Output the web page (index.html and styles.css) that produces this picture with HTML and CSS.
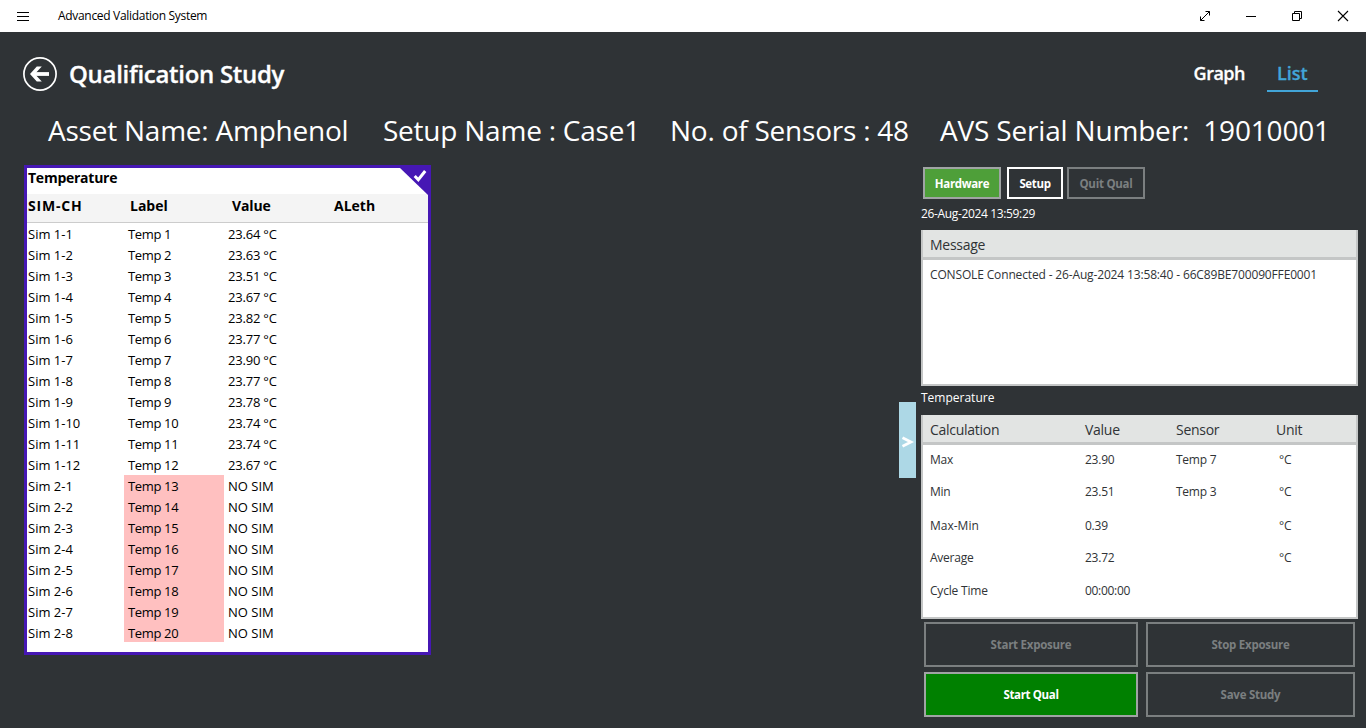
FILE: index.html
```html
<!DOCTYPE html>
<html lang="en">
<head>
<meta charset="utf-8">
<title>Advanced Validation System</title>
<link rel="stylesheet" href="styles.css">
</head>
<body>
<header class="titlebar">
  <svg class="menu" width="12" height="9" viewBox="0 0 12 9" shape-rendering="crispEdges"><path d="M0 .5h12M0 4.5h12M0 8.5h12" stroke="#000"/></svg>
  <span class="app-name">Advanced Validation System</span>
  <div class="window-controls">
    <svg width="12" height="12" viewBox="0 0 12 12" fill="none" stroke="#000"><path d="M1.5 10.5l9-9M6.5 1.5h4v4M1.5 6.5v4h4"/></svg>
    <svg width="12" height="12" viewBox="0 0 12 12" fill="none" stroke="#000"><path d="M1 6.5h10"/></svg>
    <svg width="12" height="12" viewBox="0 0 12 12" fill="none" stroke="#000"><path d="M1.5 3.5h7v7h-7zM3.5 3.5v-2h7v7h-2"/></svg>
    <svg width="12" height="12" viewBox="0 0 12 12" fill="none" stroke="#000" stroke-width="1.1"><path d="M1 1l10 10M11 1L1 11"/></svg>
  </div>
</header>
<div class="page-head">
  <svg class="back" width="34" height="34" viewBox="0 0 34 34" fill="none" stroke="#fff"><circle cx="17" cy="17" r="16.1" stroke-width="1.7"/><path d="M10 17h16" stroke-width="3.8"/><path d="M13.8 9.5h5L11.8 17l7 7.5h-5L7 17z" fill="#fff" stroke="none"/></svg>
  <h1 class="title">Qualification Study</h1>
  <nav class="tabs"><a class="tab"><span>Graph</span></a><a class="tab active"><span>List</span></a></nav>
</div>
<div class="info">
  <span class="i1">Asset Name: Amphenol</span><span class="i2">Setup Name : Case1</span><span class="i3">No. of Sensors : 48</span><span class="i4">AVS Serial Number:&nbsp; 19010001</span>
</div>
<main class="content">
  <section class="card">
    <div class="card-title"><span>Temperature</span></div>
    <svg class="corner" width="28" height="27" viewBox="0 0 28 27"><path d="M0 0h28v27z" fill="#4617b4"/><path d="M14.7 8l3.6 3.7L25.2 3" fill="none" stroke="#fff" stroke-width="3"/></svg>
    <div class="card-head"><span class="sim">SIM-CH</span><span>Label</span><span class="val">Value</span><span>ALeth</span></div>
    <div class="rows">
      <div class="row"><span>Sim 1-1</span><span>Temp 1</span><span>23.64 °C</span></div>
      <div class="row"><span>Sim 1-2</span><span>Temp 2</span><span>23.63 °C</span></div>
      <div class="row"><span>Sim 1-3</span><span>Temp 3</span><span>23.51 °C</span></div>
      <div class="row"><span>Sim 1-4</span><span>Temp 4</span><span>23.67 °C</span></div>
      <div class="row"><span>Sim 1-5</span><span>Temp 5</span><span>23.82 °C</span></div>
      <div class="row"><span>Sim 1-6</span><span>Temp 6</span><span>23.77 °C</span></div>
      <div class="row"><span>Sim 1-7</span><span>Temp 7</span><span>23.90 °C</span></div>
      <div class="row"><span>Sim 1-8</span><span>Temp 8</span><span>23.77 °C</span></div>
      <div class="row"><span>Sim 1-9</span><span>Temp 9</span><span>23.78 °C</span></div>
      <div class="row"><span>Sim 1-10</span><span>Temp 10</span><span>23.74 °C</span></div>
      <div class="row"><span>Sim 1-11</span><span>Temp 11</span><span>23.74 °C</span></div>
      <div class="row"><span>Sim 1-12</span><span>Temp 12</span><span>23.67 °C</span></div>
      <div class="row none"><span>Sim 2-1</span><span>Temp 13</span><span>NO SIM</span></div>
      <div class="row none"><span>Sim 2-2</span><span>Temp 14</span><span>NO SIM</span></div>
      <div class="row none"><span>Sim 2-3</span><span>Temp 15</span><span>NO SIM</span></div>
      <div class="row none"><span>Sim 2-4</span><span>Temp 16</span><span>NO SIM</span></div>
      <div class="row none"><span>Sim 2-5</span><span>Temp 17</span><span>NO SIM</span></div>
      <div class="row none"><span>Sim 2-6</span><span>Temp 18</span><span>NO SIM</span></div>
      <div class="row none"><span>Sim 2-7</span><span>Temp 19</span><span>NO SIM</span></div>
      <div class="row none last"><span>Sim 2-8</span><span>Temp 20</span><span>NO SIM</span></div>
    </div>
  </section>
  <button class="drawer"><svg width="12" height="12" viewBox="0 0 12 12" fill="none" stroke="#fff" stroke-width="2.7"><path d="M.5 1.8L9 6 .5 10.2"/></svg></button>
  <aside class="side">
    <div class="toolbar"><button class="btn hardware"><span>Hardware</span></button><button class="btn setup"><span>Setup</span></button><button class="btn quit off"><span>Quit Qual</span></button></div>
    <div class="stamp"><span>26-Aug-2024 13:59:29</span></div>
    <div class="panel messages">
      <div class="panel-head"><span>Message</span></div>
      <div class="message"><span>CONSOLE Connected - 26-Aug-2024 13:58:40 - 66C89BE700090FFE0001</span></div>
    </div>
    <div class="caption"><span>Temperature</span></div>
    <div class="panel stats">
      <div class="panel-head cols"><span>Calculation</span><span>Value</span><span>Sensor</span><span>Unit</span></div>
      <div class="cols stat"><span>Max</span><span>23.90</span><span>Temp 7</span><span class="unit">°C</span></div>
      <div class="cols stat tall"><span>Min</span><span>23.51</span><span>Temp 3</span><span class="unit">°C</span></div>
      <div class="cols stat"><span class="wide">Max-Min</span><span>0.39</span><span></span><span class="unit">°C</span></div>
      <div class="cols stat"><span>Average</span><span>23.72</span><span></span><span class="unit">°C</span></div>
      <div class="cols stat"><span class="cycle">Cycle Time</span><span class="cycle time">00:00:00</span></div>
    </div>
    <div class="actions"><button class="btn off"><span>Start Exposure</span></button><button class="btn off"><span>Stop Exposure</span></button><button class="btn start"><span>Start Qual</span></button><button class="btn off"><span>Save Study</span></button></div>
  </aside>
</main>
</body>
</html>
```
FILE: styles.css
```css
* { box-sizing: border-box; }
html, body { margin: 0; height: 728px; overflow: hidden; }
body { background: #2f3336; color: #fff; font-family: "Open Sans", "Noto Sans", sans-serif; font-size: 12px; }
svg { display: block; }
button { font: inherit; color: inherit; margin: 0; padding: 0; }

.titlebar { display: flex; align-items: center; height: 32px; padding: 0 17px; background: #fff; color: #000; }
.app-name { margin-left: 29px; line-height: 32px; letter-spacing: -0.31px; }
.window-controls { display: flex; gap: 34px; margin-left: auto; }

.page-head { display: flex; align-items: center; height: 83px; padding: 1px 48px 0 23px; }
.title { margin: 0 0 0 12px; font-size: 24px; font-weight: 600; line-height: 34px; letter-spacing: -0.29px; -webkit-text-stroke: 0.3px #fff; }
.tabs { display: flex; gap: 12px; margin-left: auto; font-size: 18px; font-weight: 600; letter-spacing: -0.5px; -webkit-text-stroke: 0.3px currentColor; }
.tab { padding: 0 10px; height: 36px; line-height: 34px; border-bottom: 2px solid transparent; }
.tab.active { width: 51px; color: #42a5d8; border-color: #42a5d8; letter-spacing: 0; }

.info { display: flex; height: 50px; padding-left: 48px; font-size: 28px; line-height: 30px; letter-spacing: -0.23px; white-space: nowrap; }
.i1 { width: 335px; }
.i2 { width: 287px; }
.i3 { width: 270px; }
.i4 { letter-spacing: -0.18px; }

.content { display: flex; align-items: flex-start; padding-left: 24px; }
.card { position: relative; width: 407px; height: 490px; border: 3px solid #4617b4; background: #fff; color: #000; }
.card-title { height: 26px; padding-left: 1px; font-size: 14px; font-weight: 700; line-height: 20px; letter-spacing: -0.25px; }
.corner { position: absolute; top: 0; right: 0; }
.card-head { display: grid; grid-template-columns: 102px 102px 102px 1fr; height: 29px; padding-left: 1px; background: #f4f4f4; border-bottom: 1px solid #ccc; font-size: 14px; font-weight: 700; line-height: 24px; }
.sim { letter-spacing: 0.8px; }
.val { letter-spacing: -0.15px; }
.row { display: grid; grid-template-columns: 97px 100px 1fr; height: 21px; font-size: 13px; line-height: 23px; }
.row > span:first-child { padding-left: 1px; }
.row > span + span { padding-left: 4px; letter-spacing: -0.35px; }
.row > span:last-child { letter-spacing: -0.2px; }
.none > span:last-child { letter-spacing: 0; }
.none > :nth-child(2) { background: #ffc0c0; }
.last { height: 20px; }
.last > span { height: 20px; }

.drawer { width: 17px; height: 76px; margin: 237px 5px 0 auto; border: 0; background: #add8e6; padding: 4px 0 0 3px; }
.side { width: 437px; margin-right: 8px; }
.toolbar { display: flex; height: 34px; padding: 2px 0 0 2px; }
.btn { display: flex; align-items: center; justify-content: center; border: 2px solid #a0a4a4; background: transparent; font-size: 11.5px; font-weight: 700; letter-spacing: -0.35px; }
.btn.off { border-color: #7b7f80; color: #7b7f80; letter-spacing: -0.25px; }
.hardware { width: 78px; background: #4e9f39; }
.setup { width: 56px; margin-left: 6px; border-color: #fff; }
.quit { width: 78px; margin-left: 4px; }
.stamp { height: 31px; line-height: 29px; letter-spacing: -0.35px; }
.panel { border: 2px solid #c4c6c6; border-top: 0; background: #fff; color: #303336; }
.panel-head { height: 30px; padding-left: 7px; background: #e2e4e3; border-bottom: 3px solid #c4c6c6; font-size: 14px; line-height: 29px; letter-spacing: -0.28px; }
.messages { height: 156px; }
.message { padding-left: 7px; line-height: 29px; letter-spacing: -0.15px; }
.caption { height: 29px; line-height: 24px; }
.stats { height: 204px; }
.cols { display: grid; grid-template-columns: 155px 91px 100px 1fr; padding-left: 7px; }
.stat { height: 32px; line-height: 30px; letter-spacing: -0.25px; }
.tall { height: 34px; }
.wide { letter-spacing: 0; }
.cycle { padding-top: 1px; letter-spacing: -0.2px; }
.time { letter-spacing: -0.3px; }
.unit { padding-left: 3px; }
.actions { display: grid; grid-template-columns: 214px 209px; grid-auto-rows: 45px; gap: 5px 8px; padding: 3px 0 0 3px; }
.start { background: #008000; }
```
